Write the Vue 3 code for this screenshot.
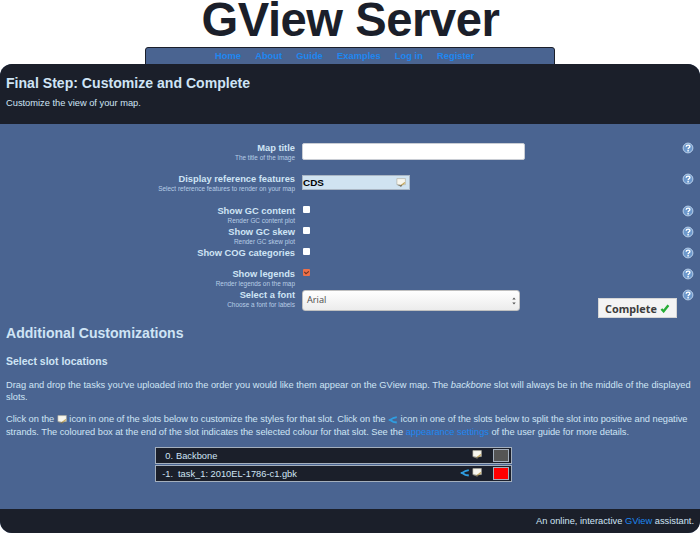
<script setup>
import { h } from 'vue'

const nav = ['Home', 'About', 'Guide', 'Examples', 'Log in', 'Register']
const fields = [
  { id: 'title', label: 'Map title', hint: 'The title of the image', type: 'text' },
  { id: 'features', label: 'Display reference features', hint: 'Select reference features to render on your map', type: 'feature' },
  { id: 'content', label: 'Show GC content', hint: 'Render GC content plot', type: 'check' },
  { id: 'skew', label: 'Show GC skew', hint: 'Render GC skew plot', type: 'check' },
  { id: 'cog', label: 'Show COG categories', hint: '', type: 'check' },
  { id: 'legends', label: 'Show legends', hint: 'Render legends on the map', type: 'check', checked: true },
  { id: 'font', label: 'Select a font', hint: 'Choose a font for labels', type: 'select' },
]
const slots = [
  { number: '0.', name: 'Backbone', color: '#555555', split: false },
  { number: '-1.', name: 'task_1: 2010EL-1786-c1.gbk', color: '#ff0000', split: true },
]

const NoteIcon = () =>
  h('svg', { viewBox: '0 0 10 9', width: 10, height: 9 }, [
    h('path', { d: 'M.9.6h8.5v6H6.5L5 7.6.9 6.6z', fill: '#f7f6ee', stroke: '#aaa798', 'stroke-width': 0.6 }),
    h('path', { d: 'M1 6.7h3.5L6 8.4H4.4z', fill: '#858273' }),
    h('path', { d: 'M5.2 7.4 8.9 4.4', stroke: '#c4a75e', 'stroke-width': 1.3 }),
    h('path', { d: 'M4.6 8.1l1-.8', stroke: '#4a4639', 'stroke-width': 0.9 }),
  ])
const SplitIcon = () =>
  h('svg', { viewBox: '0 0 10 8', width: 10, height: 8 }, [
    h('path', { d: 'M8.8 1.2 5.3 2 2 4l3.3 1.9 3.5.6M.7 4h2', fill: 'none', stroke: '#2f9de0', 'stroke-width': 1.8 }),
  ])
const HelpIcon = () =>
  h('svg', { viewBox: '0 0 12 12', width: 12, height: 12 }, [
    h('circle', { cx: 6, cy: 6, r: 4.9, fill: '#6c98cc', stroke: '#b9cfe9', 'stroke-width': 1 }),
    h('path', { d: 'M4.2 4.7C4.2 2.6 7.9 2.6 7.9 4.5 7.9 5.8 6.1 5.8 6.1 7.2M6.1 8.1v1.3', fill: 'none', stroke: '#fff', 'stroke-width': 1.4 }),
  ])
</script>

<template>
  <div class="page">
    <h1>GView Server</h1>
    <nav class="nav"><a v-for="item in nav" :key="item">{{ item }}</a></nav>
    <main class="shell">
      <header class="head">
        <h2>Final Step: Customize and Complete</h2>
        <p>Customize the view of your map.</p>
      </header>
      <section class="body">
        <div class="form">
          <div v-for="f in fields" :key="f.id" class="field" :class="f.type">
            <div class="caption">
              <div class="label">{{ f.label }}</div>
              <div class="hint">{{ f.hint }}</div>
            </div>
            <div class="control">
              <div v-if="f.type === 'text'" class="input"></div>
              <div v-else-if="f.type === 'feature'" class="chip"><b>CDS</b><NoteIcon /></div>
              <div v-else-if="f.type === 'check'" class="box" :class="{ on: f.checked }">
                <svg v-if="f.checked" viewBox="0 0 7 7" width="7" height="7"><path d="M1.3 2.8 3 4.7 5.9 2.4" fill="none" stroke="#6b3424" stroke-width="1.1" /></svg>
              </div>
              <div v-else class="dropdown">
                <span>Arial</span>
                <svg viewBox="0 0 4 8" width="4" height="8"><path d="M.3 2.5 2 .4l1.7 2.1zM.3 5.5 2 7.6l1.7-2.1z" fill="#555" /></svg>
              </div>
            </div>
            <button v-if="f.type === 'select'" class="complete">
              <span>Complete</span>
              <svg viewBox="0 0 10 9" width="10" height="9"><path d="M1.4 5 3.6 7.3 8.4 1.2" fill="none" stroke="#27ad36" stroke-width="2.4" /></svg>
            </button>
            <HelpIcon class="help" />
          </div>
        </div>
        <h2 class="additional">Additional Customizations</h2>
        <h3>Select slot locations</h3>
        <p class="first">Drag and drop the tasks you've uploaded into the order you would like them appear on the GView map. The <i>backbone</i> slot will always be in the middle of the displayed<br />slots.</p>
        <p class="second">Click on the <NoteIcon class="inline" /> icon in one of the slots below to customize the styles for that slot. Click on the <SplitIcon class="inline" /> icon in one of the slots below to split the slot into positive and negative<br />strands. The coloured box at the end of the slot indicates the selected colour for that slot. See the <a>appearance settings</a> of the user guide for more details.</p>
        <div class="slots">
          <div v-for="s in slots" :key="s.number" class="slot">
            <span class="number">{{ s.number }}</span>
            <span class="name" :class="{ task: s.split }">{{ s.name }}</span>
            <SplitIcon v-if="s.split" class="split" />
            <NoteIcon />
            <span class="swatch" :style="{ background: s.color }"></span>
          </div>
        </div>
      </section>
      <footer>An online, interactive <a>GView</a> assistant.</footer>
    </main>
  </div>
</template>

<style>
body { background: #fff; overflow: hidden; }
</style>
<style scoped>
* { box-sizing: border-box; }
h1, h2, h3, p { margin: 0; }
svg { display: block; flex: none; }
.page { width: 700px; height: 533px; display: flex; flex-direction: column; font-family: "Liberation Sans", Arial, sans-serif; font-size: 9.31px; color: #cfe4f5; overflow: hidden; }
h1 { height: 47px; flex: none; line-height: 39px; font-size: 47.2px; letter-spacing: -.45px; padding-left: 1px; text-align: center; color: #1b1f2a; white-space: nowrap; }
.nav { width: 410px; height: 18px; flex: none; margin-left: 145px; padding: 1px 0 0 69px; display: flex; gap: 14.2px; border: 1px solid #1b1f2a; border-radius: 3px 3px 0 0; background: #4a6491; color: #1e87f0; font-weight: bold; font-size: 9.35px; line-height: 15px; white-space: nowrap; }
.shell { height: 469px; flex: none; margin-top: -1px; display: flex; flex-direction: column; border-radius: 12px; overflow: hidden; background: #4a6491; }
.head { height: 60px; flex: none; padding: 11px 6px 0; background: #1b1f2a; }
.head h2, .additional { font-size: 14.08px; line-height: 17px; }
.head p { margin-top: 5px; line-height: 12px; }
.body { height: 385px; flex: none; padding: 18px 6px 0; }
.field { height: 21px; display: flex; align-items: flex-start; }
.field.text { height: 31px; }
.field.feature { height: 32px; }
.caption { width: 289px; text-align: right; white-space: nowrap; }
.label { font-weight: bold; font-size: 9.32px; line-height: 12px; }
.hint { font-size: 6.43px; line-height: 8px; color: #b7cde6; }
.control { margin-left: 7px; width: 224px; }
.input { width: 223px; height: 17px; margin-top: 1px; background: #fff; border: 1px solid #c9cdd4; border-radius: 2px; }
.chip { width: 108px; height: 15px; margin-top: 2px; padding: 0 3px 0 0; display: flex; align-items: center; justify-content: space-between; background: #d0e3f1; border: 1px solid #aab6c4; color: #000; font-size: 9.9px; line-height: 13px; }
.chip svg { margin-top: -1px; }
.box { width: 7px; height: 7px; margin: 1px 0 0 1px; background: #fff; border-radius: 1px; }
.box.on { background: #ee7049; }
.dropdown { width: 218px; height: 21px; margin-top: 1px; padding: 0 3px 2px 4px; display: flex; align-items: center; justify-content: space-between; border: 1px solid #c0c0c0; border-radius: 3px; background: linear-gradient(#fff, #ececec); color: #4b4b4b; font: 9.2px "Open Sans", "Noto Sans", sans-serif; }
.dropdown svg { margin-top: 3px; }
.complete { margin: 9px 0 0 72px; width: 79px; height: 20px; padding: 1px 0 0; display: flex; align-items: center; justify-content: center; gap: 3px; border: 1px solid #d5d5d5; border-radius: 0; background: #f4f4f4; color: #3d3d3d; font: bold 10.8px "Noto Sans", sans-serif; }
.help { margin-left: auto; }
.additional { margin-top: 15px; }
h3 { margin-top: 13px; font-size: 10.5px; line-height: 12px; }
.body p { line-height: 12.4px; white-space: nowrap; }
.first { margin-top: 12px; }
.body .second { margin-top: 9.6px; letter-spacing: -.027px; }
.inline { display: inline-block; vertical-align: 0; margin: -2px 0; }
a { color: #1e87f0; }
.slots { width: 357px; margin: 8.6px 0 0 149px; display: flex; flex-direction: column; gap: 1px; }
.slot { height: 17px; display: flex; align-items: center; padding: 0 2px 0 0; background: #1b1f2a; border: 1px solid #a4afbd; }
.number { width: 17px; padding-top: 1px; text-align: right; white-space: nowrap; }
.name { padding-top: 1px; margin-left: 3px; margin-right: auto; }
.name.task { margin-left: 5px; }
.split { margin-right: 2px; }
.slot svg { margin-top: -1px; }
.swatch { width: 16px; height: 13px; margin-left: 11px; border: 1px solid #a4afbd; }
footer { height: 24px; flex: none; padding-right: 6px; text-align: right; line-height: 24px; background: #1b1f2a; }
</style>
